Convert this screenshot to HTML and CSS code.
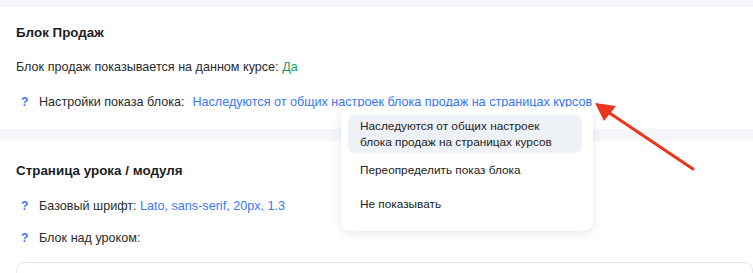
FILE: index.html
```html
<!DOCTYPE html>
<html lang="ru">
<head>
<meta charset="utf-8">
<link rel="stylesheet" href="styles.css">
</head>
<body>
<div class="page">
  <section class="card card-first">
    <h2 class="title">Блок Продаж</h2>
    <p class="row">Блок продаж показывается на данном курсе: <span class="green">Да</span></p>
    <p class="row help-row"><span class="q">?</span><span>Настройки показа блока:</span><a class="link">Наследуются от общих настроек блока продаж на страницах курсов</a></p>
  </section>
  <section class="card card-second">
    <h2 class="title">Страница урока / модуля</h2>
    <p class="row help-row"><span class="q">?</span><span>Базовый шрифт: <a class="link plain">Lato, sans-serif, 20px, 1.3</a></span></p>
    <p class="row help-row row-last"><span class="q">?</span><span>Блок над уроком:</span></p>
    <div class="editor"></div>
  </section>

  <ul class="menu">
    <li class="menu-item active">Наследуются от общих настроек<br>блока продаж на страницах курсов</li>
    <li class="menu-item">Переопределить показ блока</li>
    <li class="menu-item">Не показывать</li>
  </ul>

  <svg class="arrow" width="120" height="80" viewBox="0 0 120 80">
    <line x1="102" y1="69" x2="14" y2="10" stroke="#e8361f" stroke-width="3" stroke-linecap="round"/>
    <polygon points="4,3 25,6 13,21" fill="#e8361f"/>
  </svg>
</div>
</body>
</html>
```
FILE: styles.css
```css
* { box-sizing: border-box; }
html, body { margin: 0; padding: 0; }
body {
  background: #f4f6f9;
  font-family: "Liberation Sans", Arial, sans-serif;
  color: #2b2b2b;
  width: 753px;
  height: 273px;
  overflow: hidden;
}
.page {
  position: relative;
  padding-top: 7px;
}
.card {
  background: #fff;
  padding: 16px 16px 18px 16px;
}
.card-second {
  margin-top: 12px;
  padding-top: 20px;
}
.title {
  margin: 0;
  font-size: 13.4px;
  line-height: 20px;
  font-weight: 700;
  color: #1d1d1f;
}
.row {
  margin: 15px 0 0 0;
  font-size: 12.6px;
  line-height: 18px;
}
.card-first .help-row { margin-top: 17px; }
.card-second .help-row { margin-top: 16px; }
.card-second .row-last { margin-top: 14px; }
.help-row {
  display: flex;
  align-items: center;
  padding-left: 5px;
}
.q {
  color: #3a74f0;
  font-weight: 700;
  width: 18px;
  font-size: 12px;
}
.green { color: #1e9e5e; }
.link {
  color: #3a78f2;
  margin-left: 8px;
}
.link.plain { margin-left: 0; }
.editor {
  margin-top: 15px;
  height: 30px;
  border: 1px solid #e6e9ef;
  border-radius: 8px;
  margin-right: -16px;
}
.menu {
  position: absolute;
  left: 341px;
  top: 107px;
  width: 252px;
  margin: 0;
  padding: 8px 11px 10px 7px;
  list-style: none;
  background: #fff;
  border-radius: 9px;
  box-shadow: 0 2px 10px rgba(40, 60, 100, 0.12);
  font-size: 11.8px;
  line-height: 16px;
  color: #222;
}
.menu-item {
  padding: 9px 12px;
  border-radius: 6px;
}
.menu-item.active {
  padding: 3px 12px;
  background: #eef2f7;
}
.arrow {
  position: absolute;
  left: 591px;
  top: 100px;
}
```
